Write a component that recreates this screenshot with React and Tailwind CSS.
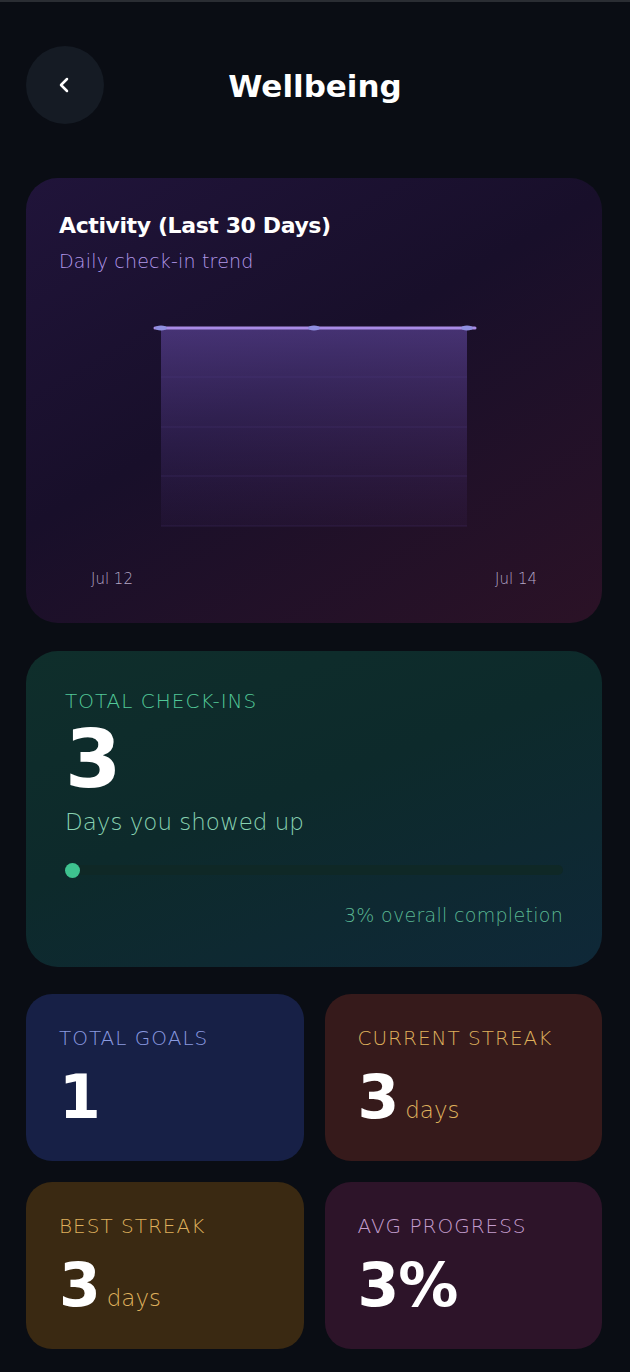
import React from "react";
import { ChevronLeft } from "lucide-react";

const D = { fontFamily: '"DejaVu Sans", "Liberation Sans", sans-serif' };

function Chart() {
  return (
    <svg width="510" height="295" viewBox="0 0 510 295" className="block">
      <defs>
        <linearGradient id="fillg" x1="0" y1="0" x2="0" y2="1">
          <stop offset="0%" stopColor="#6a4fae" stopOpacity="0.55" />
          <stop offset="100%" stopColor="#4a2f7a" stopOpacity="0.1" />
        </linearGradient>
      </defs>
      <rect x="102" y="54" width="306" height="198" fill="url(#fillg)" />
      {[103, 153, 202, 252].map((y) => (
        <line key={y} x1="102" x2="408" y1={y} y2={y} stroke="#5b4390" strokeOpacity="0.25" strokeWidth="1" />
      ))}
      <line x1="96" x2="416" y1="54" y2="54" stroke="#a98be6" strokeWidth="3" strokeLinecap="round" />
      <ellipse cx="102" cy="54" rx="6" ry="2.5" fill="#8f8fe0" />
      <ellipse cx="255" cy="54" rx="6" ry="2.5" fill="#8f8fe0" />
      <ellipse cx="408" cy="54" rx="6" ry="2.5" fill="#8f8fe0" />
    </svg>
  );
}

function SmallCard({ bg, labelColor, label, value, unit, unitColor }) {
  return (
    <div className={`rounded-[26px] h-[167px] pl-[33px] pt-[32px] ${bg}`}>
      <div className={`text-[20px] leading-[24px] font-extralight tracking-[1px] ${labelColor}`} style={D}>
        {label}
      </div>
      <div className="mt-[17px] flex items-baseline">
        <span className="text-[60px] leading-[60px] font-bold text-white tracking-[-1px]" style={D}>
          {value}
        </span>
        {unit && (
          <span className={`ml-[7px] text-[23px] font-extralight ${unitColor}`} style={D}>
            {unit}
          </span>
        )}
      </div>
    </div>
  );
}

export default function App() {
  return (
    <div className="min-h-[1372px] w-[630px] bg-[#0a0d14] border-t-2 border-[#2a2d33]" style={D}>
      {/* header */}
      <div className="relative h-[176px]">
        <button className="absolute left-[26px] top-[44px] w-[78px] h-[78px] rounded-full bg-[#151b24] flex items-center justify-center">
          <ChevronLeft size={24} strokeWidth={2.5} color="#ffffff" className="-ml-[2px]" />
        </button>
        <div className="pt-[65px] text-center text-[31px] leading-[38px] font-bold text-white">
          Wellbeing
        </div>
      </div>

      <div className="pl-[26px] pr-[28px] flex flex-col">
        {/* activity card */}
        <div className="rounded-[32px] pt-[33px] pb-[34px] bg-[linear-gradient(150deg,#20143a_0%,#180f2a_45%,#2b1226_100%)]">
          <div className="px-[33px]">
            <div className="text-[22px] leading-[30px] font-bold text-white tracking-[-0.4px]">Activity (Last 30 Days)</div>
            <div className="mt-[7px] text-[19px] leading-[26px] font-extralight text-[#b298ea] tracking-[0.2px]">Daily check-in trend</div>
            <Chart />
          </div>
          <div className="px-[65px] flex justify-between text-[15px] leading-[20px] font-extralight text-[#b4a8c6]">
            <span>Jul 12</span>
            <span>Jul 14</span>
          </div>
        </div>

        {/* check-ins card */}
        <div className="mt-[28px] rounded-[32px] px-[39px] pt-[38px] pb-[40px] bg-[linear-gradient(160deg,#0f2e2b_0%,#0d2a2b_45%,#0f2838_100%)]">
          <div className="text-[20px] leading-[24px] font-extralight text-[#52c898] tracking-[1px]">TOTAL CHECK-INS</div>
          <div className="mt-[6px] text-[81px] leading-[81px] font-bold text-white">3</div>
          <div className="mt-[8px] text-[23px] leading-[28px] font-extralight text-[#88d2b2]">Days you showed up</div>
          <div className="mt-[29px] h-[10px] rounded-full bg-[#0f2826] relative">
            <div className="absolute left-0 top-[-2px] w-[15px] h-[15px] rounded-full bg-[#3ec28f]" />
          </div>
          <div className="mt-[28px] text-right text-[19px] leading-[24px] font-extralight text-[#5ab893] tracking-[0.3px]">
            3% overall completion
          </div>
        </div>

        {/* grid */}
        <div className="mt-[27px] grid grid-cols-2 gap-x-[21px] gap-y-[21px]">
          <SmallCard bg="bg-[#172046]" labelColor="text-[#8a9ae0]" label="TOTAL GOALS" value="1" />
          <SmallCard bg="bg-[#361a1b]" labelColor="text-[#dfb05c]" label="CURRENT STREAK" value="3" unit="days" unitColor="text-[#dfb05c]" />
          <SmallCard bg="bg-[#3a2912]" labelColor="text-[#dfb05c]" label="BEST STREAK" value="3" unit="days" unitColor="text-[#dfb05c]" />
          <SmallCard bg="bg-[#2d1429]" labelColor="text-[#c49ece]" label="AVG PROGRESS" value="3%" />
        </div>
      </div>
    </div>
  );
}
